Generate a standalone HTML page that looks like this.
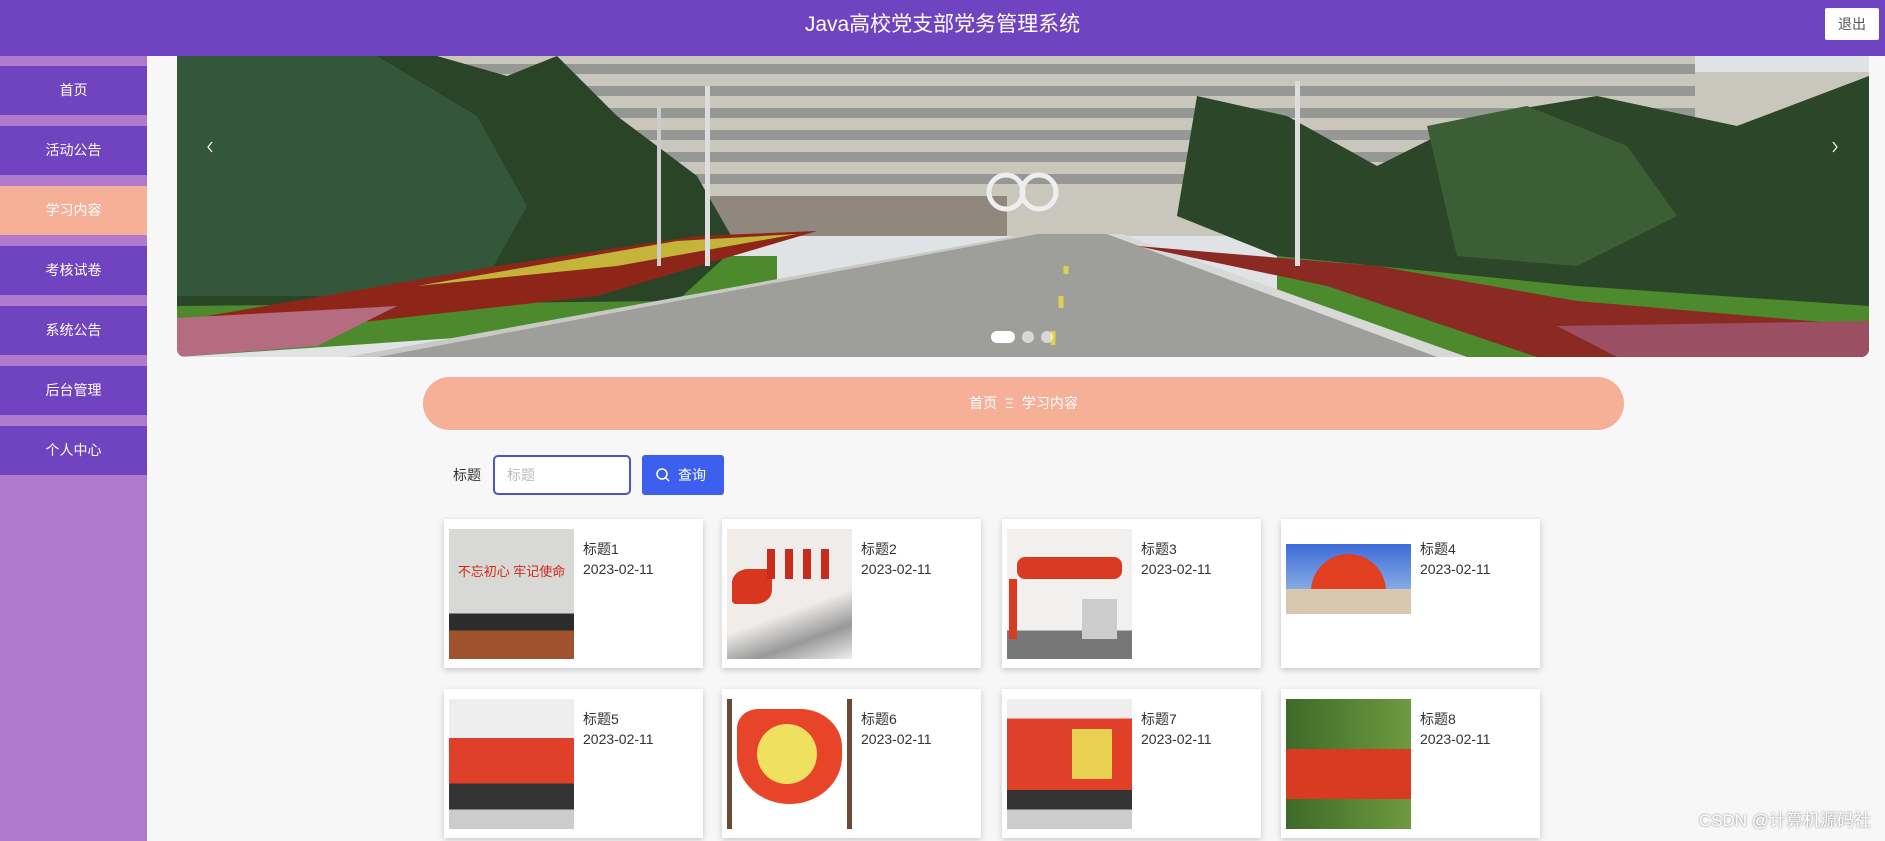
<!DOCTYPE html>
<html><head><meta charset="utf-8"><style>
*{margin:0;padding:0;box-sizing:border-box}
body{width:1885px;height:841px;overflow:hidden;background:#f7f7f7;font-family:"Liberation Sans","Noto Sans CJK SC",sans-serif;position:relative}
.hdr{position:absolute;left:0;top:0;width:1885px;height:56px;background:#7043c0;color:#fff;font-size:21px;text-align:center;line-height:50px}
.out{position:absolute;right:6px;top:8px;width:54px;height:32px;background:#fff;color:#555;font-size:14px;line-height:32px;text-align:center;border-radius:2px}
.side{position:absolute;left:0;top:56px;width:147px;height:785px;background:#b07acc}
.item{position:absolute;left:0;width:147px;height:49px;background:#7043c0;color:#fff;font-size:14px;text-align:center;line-height:49px}
.car{position:absolute;left:177px;top:56px;width:1692px;height:301px;border-radius:0 0 8px 8px;overflow:hidden}
.bc{position:absolute;left:423px;top:377px;width:1201px;height:53px;background:#f5b097;border-radius:27px;color:#fff;font-size:14px;text-align:center;line-height:53px}
.lbl{position:absolute;left:453px;top:465px;font-size:14px;color:#333}
.inp{position:absolute;left:493px;top:455px;width:138px;height:40px;border:2px solid #4a55c8;border-radius:5px;background:#fff;color:#bbb;font-size:14px;line-height:36px;padding-left:12px}
.btn{position:absolute;left:642px;top:455px;width:82px;height:40px;background:#3c5ff0;border-radius:3px;color:#fff;font-size:14px;line-height:40px;padding-left:36px}
.card{position:absolute;width:259px;height:149px;background:#fff;box-shadow:0 2px 6px rgba(0,0,0,.2)}
.card .im{position:absolute;left:5px;top:10px;width:125px;height:130px;overflow:hidden}
.card .t{position:absolute;left:139px;top:20px;font-size:14px;color:#333;line-height:20px}
.wm{position:absolute;right:14px;bottom:10px;color:#fff;font-size:17px;text-shadow:0 0 2px #777}
</style></head><body>
<div class="hdr">Java高校党支部党务管理系统</div>
<div class="out">退出</div>
<div class="side">
<div class="item" style="top:10px">首页</div>
<div class="item" style="top:70px">活动公告</div>
<div class="item" style="top:130px;background:#f5b097">学习内容</div>
<div class="item" style="top:190px">考核试卷</div>
<div class="item" style="top:250px">系统公告</div>
<div class="item" style="top:310px">后台管理</div>
<div class="item" style="top:370px">个人中心</div>
</div>
<div class="car"><svg width="1692" height="301" viewBox="0 0 1692 301">
<rect width="1692" height="301" fill="#dfe3e6"/>
<rect x="256" y="0" width="1262" height="180" fill="#c9c6bb"/>
<g fill="#767a7c" opacity=".6">
<rect x="256" y="8" width="1262" height="10"/><rect x="256" y="30" width="1262" height="10"/><rect x="256" y="52" width="1262" height="10"/><rect x="256" y="74" width="1262" height="10"/><rect x="256" y="96" width="1262" height="10"/><rect x="256" y="118" width="1262" height="10"/></g>
<rect x="330" y="140" width="500" height="40" fill="#5a4a40" opacity=".5"/>
<rect x="1518" y="16" width="174" height="70" fill="#c9c6bb"/>
<path d="M1100 180H1692V301H1100Z" fill="#4d8a2e"/>
<path d="M0 200H600V260L0 301Z" fill="#4d8a2e"/>
<path d="M0 0H260L330 20 380 0 440 60 520 120 560 190 500 245 0 250Z" fill="#2a4428"/>
<path d="M0 0H200L300 60 350 150 300 240 0 240Z" fill="#34563a"/>
<path d="M1020 40L1110 60 1200 110 1300 60 1420 40 1560 70 1692 20V250L1400 230 1100 200 1000 160Z" fill="#2c4629"/>
<path d="M1250 70L1350 50 1450 90 1500 160 1400 210 1280 200Z" fill="#3c5e35"/>
<path d="M30 260L320 210 520 180 640 175 420 240 150 270Z" fill="#8e2519"/>
<path d="M240 230L500 185 620 178 440 210Z" fill="#c5b43a"/>
<path d="M0 262L220 250 140 290 0 301Z" fill="#b56b80"/>
<path d="M860 178L200 301H1260L930 178Z" fill="#9e9e9a"/>
<path d="M930 178L1260 301H1290L945 178Z" fill="#d8d8d6"/>
<path d="M860 178L200 301H170L850 178Z" fill="#c8c8c4"/>
<path d="M960 190L1150 230 1360 301H1692V270L1400 245 1200 210Z" fill="#8b2a22"/>
<path d="M1380 270L1692 265V301H1440Z" fill="#9a4f63"/>
<path d="M889 210v8M884 240v12M876 275v14" stroke="#e0d050" stroke-width="5"/>
<rect x="528" y="30" width="5" height="180" fill="#ddd"/><rect x="1118" y="25" width="5" height="185" fill="#ddd"/><rect x="480" y="50" width="4" height="160" fill="#ccc"/>
<circle cx="829" cy="136" r="17" fill="none" stroke="#eee" stroke-width="5"/><circle cx="862" cy="136" r="17" fill="none" stroke="#eee" stroke-width="5"/>
<rect x="814" y="275" width="24" height="12" rx="6" fill="#fff"/><rect x="845" y="275" width="12" height="12" rx="6" fill="#fff" opacity=".6"/><rect x="864" y="275" width="12" height="12" rx="6" fill="#fff" opacity=".6"/>
<path d="M35 86l-4 5 4 5M1656 86l4 5-4 5" stroke="#fff" fill="none" stroke-width="1.2"/>
</svg></div>
<div class="bc">首页 &nbsp;Ξ&nbsp; 学习内容</div>
<div class="lbl">标题</div>
<div class="inp">标题</div>
<div class="btn"><svg style="position:absolute;left:14px;top:13px" width="14" height="14"><circle cx="6" cy="6" r="5" stroke="#fff" fill="none" stroke-width="1.5"/><path d="M10 10l3 3" stroke="#fff" stroke-width="1.5"/></svg>查询</div>

<div class="card" style="left:444px;top:519px"><div class="im" style="background:linear-gradient(#d8d8d6 0 65%,#2c2c2c 65% 78%,#a0522d 78%)"><div style="position:absolute;top:32px;left:0;right:0;text-align:center;color:#d02818;font-size:13px;white-space:nowrap">不忘初心 牢记使命</div></div><div class="t">标题1<br>2023-02-11</div></div>
<div class="card" style="left:722px;top:519px"><div class="im" style="background:linear-gradient(160deg,#efecea 0 60%,#999 80%,#eee)"><div style="position:absolute;left:5px;top:40px;width:40px;height:35px;background:#d8361f;border-radius:40% 10%"></div><div style="position:absolute;left:40px;top:20px;width:70px;height:30px;background:repeating-linear-gradient(90deg,#c82b1c 0 8px,transparent 8px 18px)"></div></div><div class="t">标题2<br>2023-02-11</div></div>
<div class="card" style="left:1002px;top:519px"><div class="im" style="background:linear-gradient(#f1f0ee 0 78%,#777 78%)"><div style="position:absolute;left:10px;top:28px;width:105px;height:22px;background:#d83a22;border-radius:8px"></div><div style="position:absolute;left:75px;top:70px;width:35px;height:40px;background:#ccc"></div><div style="position:absolute;left:2px;top:50px;width:8px;height:60px;background:#d83a22"></div></div><div class="t">标题3<br>2023-02-11</div></div>
<div class="card" style="left:1281px;top:519px"><div class="im" style="background:#fff"><div style="position:absolute;left:0;top:15px;width:125px;height:60px;background:linear-gradient(#3d6bd8,#9ec0e8)"></div><div style="position:absolute;left:25px;top:25px;width:75px;height:50px;background:#e04020;border-radius:40px 40px 0 0"></div><div style="position:absolute;left:0;top:60px;width:125px;height:25px;background:#d8c8b0"></div></div><div class="t">标题4<br>2023-02-11</div></div>

<div class="card" style="left:444px;top:689px"><div class="im" style="background:linear-gradient(#eee 0 30%,#e0402a 30% 65%,#333 65% 85%,#ccc 85%)"></div><div class="t">标题5<br>2023-02-11</div></div>
<div class="card" style="left:722px;top:689px"><div class="im" style="background:linear-gradient(90deg,#6b4a35 0 4%,#fff 4% 96%,#6b4a35 96%)"><div style="position:absolute;left:10px;top:10px;width:105px;height:95px;background:#e8442a;border-radius:20% 40% 50% 50%"></div><div style="position:absolute;left:30px;top:25px;width:60px;height:60px;background:#f0e060;border-radius:50%"></div></div><div class="t">标题6<br>2023-02-11</div></div>
<div class="card" style="left:1002px;top:689px"><div class="im" style="background:linear-gradient(#eee 0 15%,#e0402a 15% 70%,#333 70% 85%,#ccc 85%)"><div style="position:absolute;left:65px;top:30px;width:40px;height:50px;background:#e8d050"></div></div><div class="t">标题7<br>2023-02-11</div></div>
<div class="card" style="left:1281px;top:689px"><div class="im" style="background:linear-gradient(90deg,#3d6a28,#6f9a40)"><div style="position:absolute;left:0;top:50px;width:125px;height:50px;background:#d83a22"></div></div><div class="t">标题8<br>2023-02-11</div></div>
<div class="wm">CSDN @计算机源码社</div>
</body></html>
